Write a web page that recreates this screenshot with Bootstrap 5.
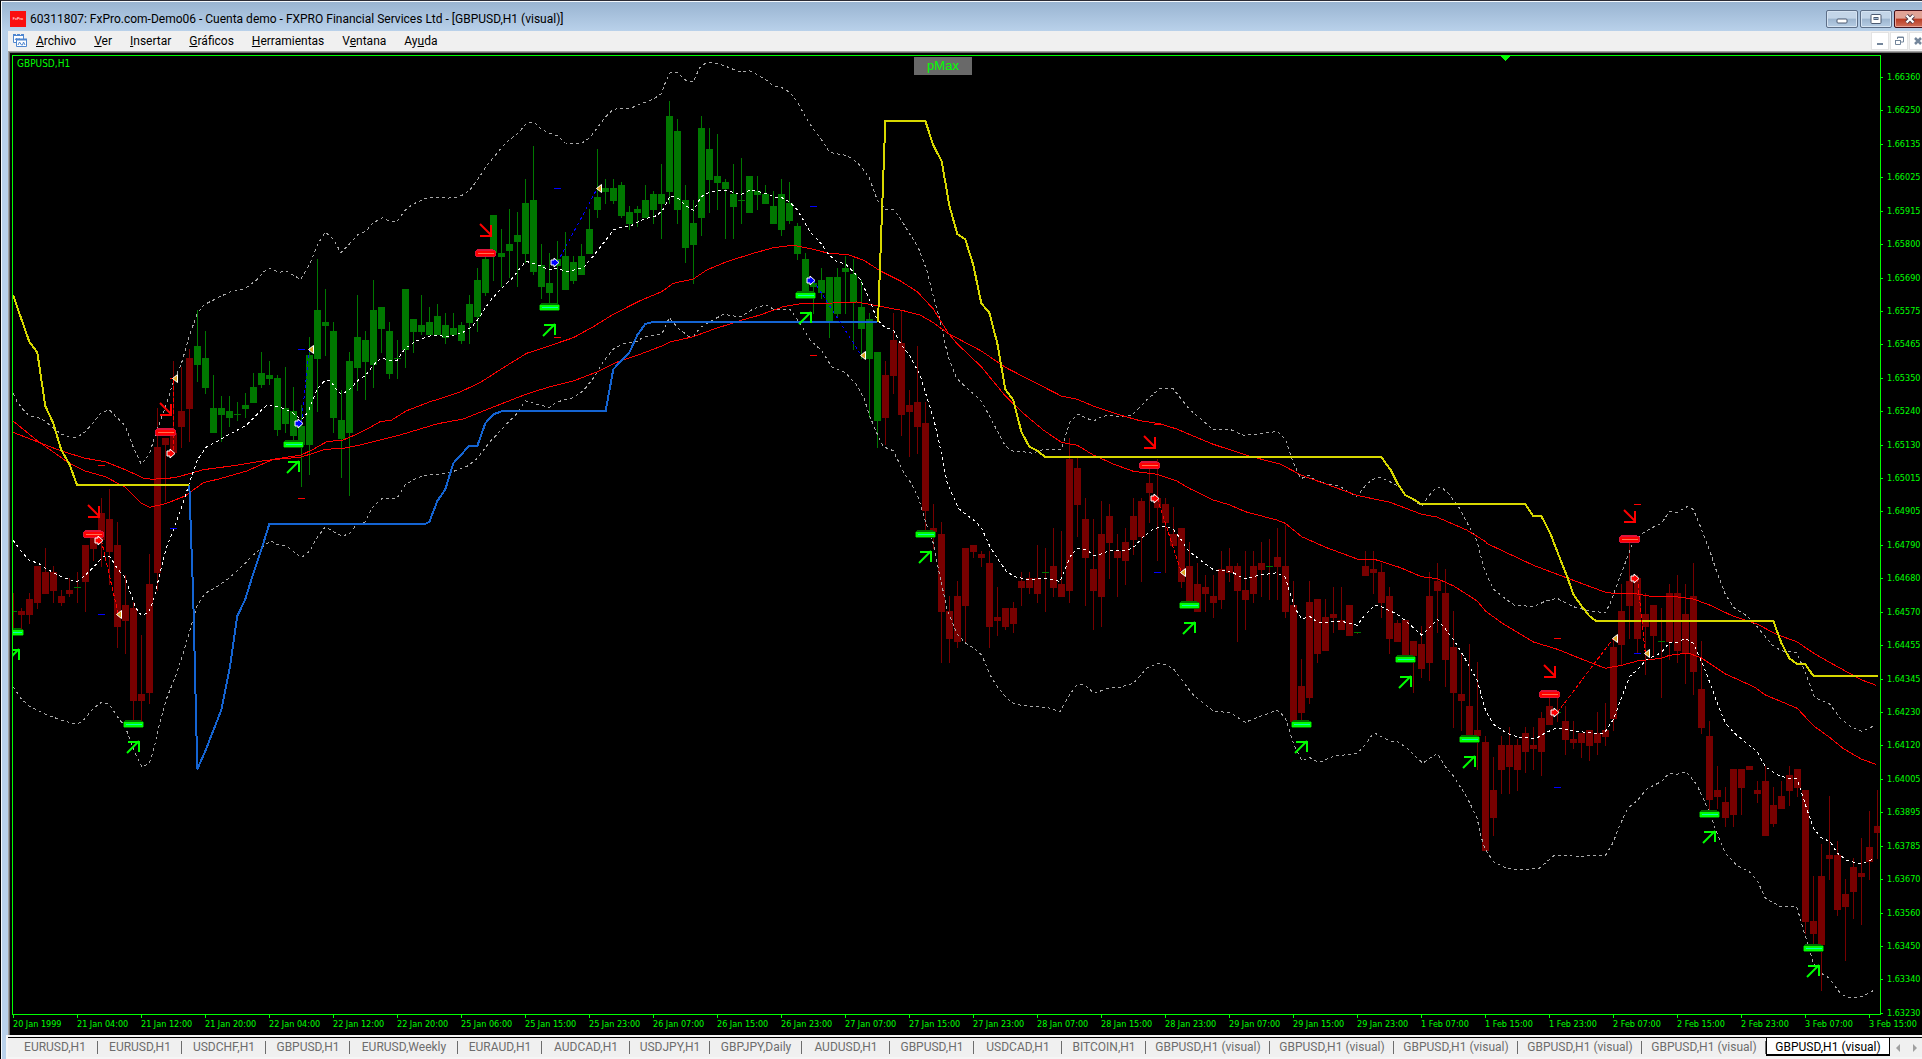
<!DOCTYPE html>
<html lang="es">
<head>
<meta charset="utf-8">
<meta name="viewport" content="width=device-width, initial-scale=1">
<title>60311807: FxPro.com-Demo06 - Cuenta demo</title>
<link rel="stylesheet" href="https://cdn.jsdelivr.net/npm/bootstrap@5.3.0/dist/css/bootstrap.min.css">
<style>
  :root { --lime: #00ff00; --ui: Roboto, "Noto Sans", sans-serif; --axis: "DejaVu Sans Condensed", "DejaVu Sans", sans-serif; }
  body { background: #b9d1ea; font-family: var(--ui); font-size: 12px; line-height: 16px; color: #000; }
  .app-window { border-top: 1px solid #2b2b35; border-left: 1px solid #000; box-shadow: inset 1px 1px 0 #f4f8fc; padding: 1px 0 2px 1px; }
  .title-strip { height: 29px; background: linear-gradient(#99b4d1, #b9d1ea); padding: 5px 0 0 8px; }
  .fx-logo { width: 16px; height: 16px; background: #fa0f0f; color: #fff; font-size: 4px; line-height: 16px; }
  .client-area { margin-left: 6px; }
  .sys-group { gap: 2px; padding-bottom: 3px; }
  .sys-btn { width: 32px; height: 18px; border: 1px solid #5d6f88; border-radius: 2px; padding: 0; box-shadow: inset 0 0 0 1px #d5e3f2; background: linear-gradient(#c3d5e8 0 45%, #9db5cf 50%, #b6cde4); line-height: 0; }
  .sys-close { border-color: #431019; box-shadow: inset 0 0 0 1px #e9a397; background: linear-gradient(#e0a396 0 45%, #b93a22 50%, #d0705a); margin-right: -4px; }
  .menu-strip { height: 20px; background: #f0f0f0; padding-left: 4px; }
  .menu-list { gap: 18px; }
  .menu-strip button.menu-item { border: 0; background: none; padding: 0; line-height: 20px; font-size: 12px; color: #000; }
  .mdi-group { gap: 1px; }
  .mdi-btn { width: 18px; height: 18px; border: 1px solid #e3e3e3; background: #fff; padding: 0; line-height: 0; }
  .mdi-last { margin-right: -5px; }
  .chart-pane { background: #000; border-top: 1px solid #a0a0a0; border-left: 1px solid #a0a0a0; box-shadow: inset 1px 1px 0 #696969; color: var(--lime); font-family: var(--axis); font-size: 9px; line-height: 12px; padding: 3px 0 0 3px; }
  .plot-box { border: 1px solid var(--lime); min-width: 0; }
  .plot-box svg.plot { width: 100%; height: 100%; display: block; }
  .symbol-name { left: 4px; top: 2px; font-size: 10px; }
  .pmax-btn { left: 48.26%; top: 1px; width: 58px; height: 18px; border: 0; padding: 0; background: #696969; color: var(--lime); font: 13px/18px "Liberation Sans", sans-serif; }
  .price-axis { width: 41px; padding: 16px 0 0 6px; margin-bottom: -4px; }
  .price-axis span { position: relative; display: block; }
  .price-axis span::before { content: ""; position: absolute; left: -6px; top: 6px; width: 2px; height: 1px; background: var(--lime); }
  .time-axis { display: grid; grid-template-columns: repeat(29, 64fr) 53fr; height: 20px; padding-left: 1px; }
  .time-axis span { position: relative; white-space: nowrap; padding-top: 3px; min-width: 0; }
  .time-axis span::before { content: ""; position: absolute; left: 0; top: 0; width: 1px; height: 3px; background: var(--lime); }
  .tab-strip { border-top: 1px solid #000; outline: 2px solid #f5f5f5; background: #f0f0f0; height: 20px; margin-top: 2px; display: grid;
    grid-template-columns: 90fr 84fr 84fr 84fr 108fr 84fr 88fr 80fr 92fr 88fr 84fr 88fr 84fr 124fr 124fr 124fr 124fr 124fr 124fr 32fr; }
  .tab-strip button { border: 0; background: none; padding: 0; color: #6d6d6d; font-size: 12px; line-height: 18px; height: 18px; white-space: nowrap; min-width: 0; position: relative; }
  .tab-strip button:first-child { padding-left: 4px; }
  .tab-strip button.chart-tab::after { content: ""; position: absolute; right: 0; top: 3px; height: 13px; width: 1px; background: #6d6d6d; }
  .tab-strip button.chart-tab.current { background: #fff; color: #000; border: solid #000; border-width: 0 1px 2px 1px; }
  .tab-strip button.chart-tab.current::after { display: none; }
</style>
<script src="https://cdn.jsdelivr.net/npm/bootstrap@5.3.0/dist/js/bootstrap.bundle.min.js"></script>
</head>
<body class="overflow-hidden">
<div class="app-window vh-100 d-flex flex-column">
  <header class="title-strip d-flex align-items-center flex-shrink-0">
    <div class="fx-logo text-center me-1 flex-shrink-0">FxPro</div>
    <div class="text-nowrap flex-grow-1">60311807: FxPro.com-Demo06 - Cuenta demo - FXPRO Financial Services Ltd - [GBPUSD,H1 (visual)]</div>
    <div class="sys-group d-flex align-self-end flex-shrink-0">
      <button class="sys-btn" aria-label="Minimizar"><svg width="12" height="10"><rect x="1" y="5" width="10" height="4" rx="1" fill="#fff" stroke="#4c5b72"/></svg></button>
      <button class="sys-btn" aria-label="Maximizar"><svg width="12" height="10"><rect x="1" y=".5" width="10" height="9" rx="1" fill="#fff" stroke="#4c5b72"/><rect x="4" y="3.500" width="4" height="2" fill="#9db5cf" stroke="#4c5b72"/></svg></button>
      <button class="sys-btn sys-close" aria-label="Cerrar"><svg width="12" height="10"><path d="M2.500 1.500 9.500 8.500M9.500 1.500 2.500 8.500" stroke="#4c3a48" stroke-width="4"/><path d="M2.500 1.500 9.500 8.500M9.500 1.500 2.500 8.500" stroke="#fff" stroke-width="2.300"/></svg></button>
    </div>
  </header>

  <main class="client-area d-flex flex-column flex-grow-1">
    <nav class="menu-strip d-flex align-items-center flex-shrink-0">
      <svg class="me-2" width="16" height="16" viewBox="0 0 16 16" fill="#fff" stroke="#4f86cf"><path d="M1.500 2.500v7h10v-7z"/><path d="M1 2h11" stroke-width="2" stroke-dasharray="3 1"/><path d="M3 7l1.500-2L6 7l1.500-2" fill="none"/><path d="M4.500 6.500v7h10v-7z"/><path d="M4 6.500h11" stroke-width="2"/><path d="M6 12l1.500-3 2 3h1l1-3 1.500 3" fill="none"/></svg>
      <div class="menu-list d-flex flex-grow-1">
        <button class="menu-item"><u>A</u>rchivo</button>
        <button class="menu-item"><u>V</u>er</button>
        <button class="menu-item"><u>I</u>nsertar</button>
        <button class="menu-item"><u>G</u>ráficos</button>
        <button class="menu-item"><u>H</u>erramientas</button>
        <button class="menu-item">V<u>e</u>ntana</button>
        <button class="menu-item">Ay<u>u</u>da</button>
      </div>
      <div class="mdi-group d-flex flex-shrink-0">
        <button class="mdi-btn" aria-label="Minimizar ventana"><svg width="10" height="10"><path d="M2 8h6" stroke="#74869b" stroke-width="2"/></svg></button>
        <button class="mdi-btn" aria-label="Restaurar ventana"><svg width="10" height="10" fill="none" stroke="#74869b"><path d="M3.500 3V1h6v5H7M3 1.500h7M1.500 4.500h5v4h-5zM1 4.500h6"/></svg></button>
        <button class="mdi-btn mdi-last" aria-label="Cerrar ventana"><svg width="10" height="10"><path d="M2 2l6 6M8 2 2 8" stroke="#74869b" stroke-width="2.500"/></svg></button>
      </div>
    </nav>

    <section class="chart-pane d-flex flex-column flex-grow-1">
      <div class="d-flex flex-grow-1">
        <div class="plot-box position-relative flex-grow-1">
          <svg class="plot position-absolute" viewBox="13 56 1867 958" preserveAspectRatio="none" shape-rendering="crispEdges" id="plot"></svg>
          <div class="symbol-name position-absolute">GBPUSD,H1</div>
          <button class="pmax-btn position-absolute">pMax</button>
        </div>
        <div class="price-axis d-flex flex-column justify-content-between flex-shrink-0" id="prices"></div>
      </div>
      <div class="time-axis flex-shrink-0" id="times"></div>
    </section>

    <footer class="tab-strip flex-shrink-0" id="tabs"></footer>
  </main>
</div>

<script>
const el = id => document.getElementById(id);

el('prices').innerHTML = [66360,66250,66135,66025,65915,65800,65690,65575,65465,65350,65240,65130,65015,64905,64790,64680,64570,64455,64345,64230,64120,64005,63895,63785,63670,63560,63450,63340,63230]
  .map(p => `<span>1.${p}</span>`).join('');

el('times').innerHTML = ['20 Jan 1999','21 Jan 04:00','21 Jan 12:00','21 Jan 20:00','22 Jan 04:00','22 Jan 12:00','22 Jan 20:00','25 Jan 06:00','25 Jan 15:00','25 Jan 23:00','26 Jan 07:00','26 Jan 15:00','26 Jan 23:00','27 Jan 07:00','27 Jan 15:00','27 Jan 23:00','28 Jan 07:00','28 Jan 15:00','28 Jan 23:00','29 Jan 07:00','29 Jan 15:00','29 Jan 23:00','1 Feb 07:00','1 Feb 15:00','1 Feb 23:00','2 Feb 07:00','2 Feb 15:00','2 Feb 23:00','3 Feb 07:00','3 Feb 15:00']
  .map(t => `<span>${t}</span>`).join('');

const v = 'GBPUSD,H1 (visual)';
el('tabs').innerHTML = ['EURUSD,H1','EURUSD,H1','USDCHF,H1','GBPUSD,H1','EURUSD,Weekly','EURAUD,H1','AUDCAD,H1','USDJPY,H1','GBPJPY,Daily','AUDUSD,H1','GBPUSD,H1','USDCAD,H1','BITCOIN,H1',v,v,v,v,v,v]
  .map((t, i) => `<button class="chart-tab${i === 18 ? ' current' : ''}">${t}</button>`).join('') +
  '<button aria-label="Desplazar"><svg width="26" height="10" fill="#a0a0a0"><path d="M7 1v8L3 5zM20 1v8l4-4z"/></svg></button>';

/* Panels of the chart: origin x, origin y, units per pixel in x and y */
const P = { A:[0,280,3,3], T:[180,150,3,3], B:[440,50,3,3], C:[860,50,3,3], E:[860,440,3,3], R:[1300,400,3,3], D:[1360,480,2.79,3] };
const at = (k, x, y) => [P[k][0] + x / P[k][2], P[k][1] + y / P[k][3]];
let out = '';

/* Candles: body top, body bottom, wick top, wick bottom */
const GREEN = '#007800', RED = '#780000';
const dojis = [0, 8, 129, 157, 168, 193, 206];
function candles(first, k, text) {
  text.split(';').forEach((row, n) => {
    const i = first + n, x = 13 + 8 * i;
    const [bt, bb, wt, wb] = row.trim().split(/\s+/).map(q => Math.round(P[k][1] + q / 3));
    const c = i >= 23 && i <= 108 ? GREEN : RED;
    if (wb > wt) out += `<rect x="${x}" y="${wt}" width="1" height="${wb - wt}" fill="${c}"/>`;
    out += `<rect x="${x - 3}" y="${bt}" width="7" height="${bb - bt}" fill="${dojis.includes(i) ? GREEN : c}"/>`;
  });
}
candles(0, 'A', '993 996 940 1045;993 1005 984 1048;957 1005 939 1032;858 969 858 987;876 942 804 942;876 933 858 969;948 969 930 978;930 942 895 951;921 924 876 969;795 906 795 996;770 807 770 843;699 780 654 861;717 816 627 915;795 1041 726 1104;975 1023 885 1122;984 1263 966 1320;1242 1263 1065 1322;912 1239 822 1272;501 879 384 933;474 496 474 666;460 520 243 520;393 441 261 504;234 387 207 486;198 255 90 306;234 324 153 342;384 459 285 459;384 405 348 486;393 414 348 441;402 405 366 423;375 387 339 414;321 369 279 369;279 315 216 324;285 297 243 315;294 450 285 468;384 432 261 459;393 468 321 480;438 495 375 621;225 495 171 585;90 237 -63 396;126 138 27 228;153 414 126 459;420 477 330 594;243 459 216 648;171 264 45 333;180 246 153 360;90 255 0 324;81 147 81 219;153 282 126 297;234 237 180 297;27 210 27 264;117 156 117 219;135 156 45 165;126 165 81 165;108 165 72 165;135 174 99 192;144 165 99 165;135 183 126 192;72 129 45 192');
candles(58, 'B', '690 801 654 846;627 729 620 738;495 610 495 693;609 621 537 711;582 603 477 684;555 576 486 711;459 612 387 639;450 666 288 675;645 711 582 747;699 729 609 765;627 648 573 765;618 720 546 720;636 693 618 702;618 675 582 675;537 612 477 612;441 480 297 504;414 426 387 462;414 453 387 462;405 498 396 504;486 522 468 540;477 489 468 531;450 504 405 504;432 480 423 522;432 462 342 567;198 426 153 462;243 480 207 522;450 594 405 639;519 585 450 702;234 504 198 558;297 390 234 489;378 399 252 480;396 417 387 567;432 471 342 567;450 453 324 522;378 489 378 489;423 435 378 480;432 462 405 462;468 522 423 522;432 540 387 558;459 513 396 522;528 612 519 630;627 729 609 729;699 711 690 792;690 729 654 747;681 816 681 864;681 792 654 801;654 666 618 792;672 759 627 900;771 837 690 927;807 927 789 1104;906 1113 906 1194;975 1104 933 1185;870 978 789 1032;879 1095 780 1158;1065 1086 1020 1221;1056 1131 888 1212');
candles(114, 'E', '-51 213 -114 270;264 276 192 327;282 516 246 669;513 598 468 669;468 606 423 624;324 498 324 606;315 336 315 354;342 354 333 381;369 561 333 624;531 543 441 588;504 561 504 570;504 552 486 579;423 444 396 498;414 444 396 462;414 462 315 489;396 399 324 516;378 444 264 471;432 471 273 471;57 453 -6 489;84 195 54 291;237 354 174 498;387 453 237 570;282 471 183 561;228 309 192 417;333 354 282 471;306 363 264 435;228 300 174 345;183 291 174 426;129 159 84 249;174 204 57 363;192 249 174 399;282 318 201 318;264 426 264 444;378 486 306 486;432 516 369 516;441 462 405 516;468 489 405 534;387 480 333 507;378 399 324 426;378 453 369 606;450 480 333 570;378 462 333 489;369 390 306 471;378 381 297 480;351 381 264 480;378 516 255 534;495 845 423 845;738 819 657 840;486 774 423 792;477 642 477 669;531 633 477 633;522 534 441 579;540 570 441 570;495 588 495 588;576 579 576 582;378 408 333 408;387 399 333 462');
candles(171, 'D', '276 369 249 414;348 477 321 522;429 486 420 486;420 525 420 528;483 528 483 639;492 567 438 594;348 549 276 603;303 333 249 459;339 540 267 621;501 639 393 744;642 663 519 753;678 768 492 768;750 768 546 870;786 1113 768 1113;930 1014 831 1068;795 870 768 942;795 861 741 942;795 870 777 933;759 816 741 879;795 807 741 870;714 816 696 888;678 735 655 735;696 699 655 726;723 780 678 825;777 789 723 807;759 789 759 834;750 798 750 843;759 789 696 825;750 771 669 798;501 717 470 753;393 495 312 555;303 378 190 477;294 477 285 519;402 441 339 585;375 468 375 530;483 486 384 654;339 486 312 540;339 513 285 549;402 519 312 612;348 576 249 645;627 744 483 762;768 960 723 990;930 951 858 987;966 1014 921 1041;867 1005 867 1041;867 924 867 1005;858 870 858 870;930 942 903 969;903 1068 858 1068;975 1032 921 1041;948 987 903 987;885 933 858 978;867 924 867 951;930 1326 930 1362;1323 1362 1188 1395;1188 1395 1092 1533;1125 1137 948 1200;1125 1290 1083 1308;1242 1281 1197 1443;1161 1236 1134 1317;1179 1191 1074 1335;1101 1146 993 1200;1038 1059 930 1137');

/* Indicator lines, one string of points for each panel they cross */
function line(color, width, dash, parts) {
  const pts = parts.flatMap(([k, s]) => s.trim().split(/\s+/).map(q => at(k, ...q.split(',').map(Number)).map(n => n.toFixed(1)).join(',')));
  out += `<polyline fill="none" stroke="${color}" stroke-width="${width}" ${dash ? `stroke-dasharray="${dash}"` : ''} points="${pts.join(' ')}"/>`;
}
line('#a8a8a8', 1, '3 3', [
 ['A','39,340 52,366 70,390 88,408 112,411 136,423 160,445 184,462 208,471 232,472 256,455 280,428 304,397 328,390 352,414 376,438 400,502 424,553 448,523 466,465 480,425 500,370 520,305 544,252 568,168 592,100'],
 ['T','72,465 90,455 120,440 150,426 180,420 196,415 230,390 250,366 268,355 298,367 320,364 340,376 362,388 390,340 412,285 436,246 462,270 482,308 510,280 534,254 558,243 580,218 608,203 630,214 652,214 676,180 700,162 740,144 780,142 800,145 830,141 850,134 868,122 885,100'],
 ['B','112,390 140,347 184,294 210,268 234,250 262,217 282,217 304,237 328,250 352,257 376,279 424,280 448,265 472,233 496,202 520,178 544,175 572,175 600,162 640,148 664,131 676,98 690,68 712,67 736,90 760,95 778,55 796,40 820,38 850,46 880,58 904,67 928,62 952,74 976,88 1000,107 1024,112 1048,126 1072,155 1096,200 1120,237 1144,268 1168,307 1216,316 1240,328 1264,350 1288,384 1312,450 1336,478 1360,478 1384,510 1408,550 1434,590'],
 ['C','200,660 215,720 240,810 264,920 290,985 318,1012 364,1053 400,1120 436,1188 460,1204 490,1205 518,1210 552,1198 604,1198 630,1115 655,1093 700,1114 724,1100 748,1096 772,1100 800,1100 820,1092 860,1050 900,1015 940,1017 990,1080 1020,1105 1060,1140 1110,1138 1150,1156 1200,1152 1252,1144 1276,1168 1295,1225 1320,1283'],
 ['R','5,235 28,226 45,240 82,252 120,259 140,272 170,290 200,252 220,238 240,232 270,245 300,262 318,288 340,300 365,318 385,290 405,266 425,262 445,280 480,327 510,385 530,420 540,460 552,505'],
 ['D','360,300 372,327 410,360 430,375 484,380 520,362 550,355 573,368 595,380 640,393 685,398 700,365 725,290 745,235 760,190 790,158 815,143 841,130 863,95 885,97 912,80 930,88 950,140 975,210 997,280 1020,345 1045,385 1080,408 1108,440 1150,495 1175,512 1218,518 1240,570 1268,652 1310,672 1340,715 1370,740 1400,754 1440,735']]);
line('#a8a8a8', 1, '3 3', [
 ['A','39,1220 64,1257 88,1278 136,1302 184,1321 232,1333 256,1315 280,1285 304,1267 328,1272 352,1310 376,1340 390,1380 410,1430 426,1460 448,1450 462,1405 480,1325 500,1255 530,1180 550,1120 570,1050 590,980 615,940 640,927 680,900 720,865 760,825 790,800 812,782 830,793 860,798 904,833 930,812 950,775 976,740 1000,755 1028,769 1052,758 1064,740 1096,725 1115,685 1145,656 1190,656 1216,614 1250,594 1290,583'],
 ['B','0,1273 30,1268 85,1247 112,1225 150,1175 200,1122 230,1092 256,1052 290,1063 328,1072 350,1056 400,1043 430,1022 460,985 490,935 520,897 550,882 590,875 610,861 665,853 688,803 715,835 745,858 762,858 780,833 810,815 850,793 900,801 940,777 976,764 1000,777 1050,777 1080,820 1110,870 1145,902 1175,950 1216,968 1250,1005 1272,1045 1290,1100 1315,1160 1330,1190 1360,1202 1390,1265 1415,1302 1436,1345'],
 ['E','195,240 220,310 240,410 262,510 290,580 315,608 345,627 365,645 390,705 412,740 440,775 465,793 510,799 560,802 600,815 625,770 652,733 676,736 702,760 750,743 780,742 820,730 860,685 892,670 916,674 940,686 1000,765 1060,813 1110,818 1156,847 1200,829 1252,811 1276,832 1300,910 1325,962 1350,953 1376,968 1420,949 1492,940 1515,915 1540,880'],
 ['D','42,760 85,784 105,785 130,803 175,850 195,835 216,820 238,860 262,890 300,955 327,1015 335,1060 348,1105 372,1145 410,1165 440,1170 500,1165 540,1128 575,1126 615,1131 640,1127 685,1126 705,1090 725,1035 747,985 775,960 800,927 840,905 863,880 885,883 910,875 940,915 970,985 1000,1070 1020,1120 1050,1155 1090,1178 1110,1205 1131,1255 1175,1281 1218,1279 1243,1370 1265,1450 1287,1480 1310,1495 1340,1540 1360,1552 1390,1553 1410,1545 1440,1527']]);
line('#f00', 1, '', [
 ['A','39,423 112,482 208,550 256,573 316,590 376,622 424,670 450,682 500,670 555,648 610,608 660,596 740,573 820,538 904,525 940,508 980,485 1030,480 1060,467 1100,448 1140,425 1175,420 1220,392 1290,365'],
 ['B','0,1046 60,1026 120,998 190,953 260,910 320,890 400,863 460,830 520,793 600,752 665,725 700,700 760,687 800,660 860,635 940,610 1000,593 1060,586 1120,598 1170,611 1220,613 1270,630 1320,662'],
 ['C','120,692 172,725 220,777 264,848 290,880 364,950 436,1038 490,1090 550,1140 604,1177 652,1186 700,1215 760,1242 820,1264 892,1273 950,1293 990,1316 1055,1348'],
 ['E','1060,180 1110,195 1156,215 1250,240 1276,250 1325,290 1400,323 1492,357'],
 ['D','0,238 40,238 110,262 172,290 216,296 260,317 327,363 350,393 400,432 484,486 551,508 620,538 685,565 730,556 774,543 841,535 863,526 915,519 953,534 1020,582 1100,621 1131,645 1220,685 1265,737 1310,772 1350,807 1400,838 1440,853']]);
line('#f00', 1, '', [
 ['A','39,457 112,485 184,513 256,535 316,545 376,569 430,594 455,598 525,593 610,569 700,557 800,541 904,531 976,508 1030,505 1085,494 1140,480 1200,465 1300,435'],
 ['B','0,1120 70,1107 150,1075 260,1032 330,1010 400,993 470,966 530,937 600,913 665,888 690,876 760,860 820,838 900,812 960,795 1030,770 1090,760 1180,759 1250,756 1320,769'],
 ['C','130,782 180,795 220,818 264,850 364,903 436,952 500,985 604,1038 652,1048 700,1068 780,1095 840,1112 900,1121 950,1137 1000,1158 1060,1183 1170,1219 1260,1242'],
 ['R','5,226 80,253 170,286 270,307 365,343 410,351 500,390 560,427'],
 ['D','353,190 484,256 580,295 685,337 720,342 762,340 810,349 880,350 930,357 975,375 1040,408 1108,432 1160,462 1220,486 1265,519 1310,547 1400,600 1440,616']]);
line('#fff', 1, '3 3', [
 ['A','39,780 64,815 88,841 115,850 136,864 160,878 184,890 208,899 232,904 256,886 280,862 310,830 330,830 352,866 376,893 390,935 408,985 426,1008 448,993 462,955 480,880 500,800 520,750 544,685 568,610 592,540 620,500 650,485 690,462 740,435 772,402 800,376 830,380 856,387 880,400 904,419 925,395 950,330 976,300 992,303 1008,328 1024,343 1048,330 1075,300 1096,287 1120,255 1144,234 1168,240 1192,240 1216,205 1250,182 1290,168'],
 ['B','0,857 20,860 64,850 96,830 120,800 148,755 184,715 220,682 240,655 258,634 290,643 328,660 350,655 380,664 400,661 430,653 460,618 490,580 520,540 548,530 570,529 610,508 650,497 672,475 690,437 715,445 738,468 760,481 784,440 808,427 850,421 880,427 904,433 930,420 960,426 985,432 1005,442 1024,442 1048,455 1072,480 1090,510 1110,545 1145,583 1165,612 1185,632 1216,642 1240,665 1262,690 1285,740 1312,810 1336,833 1360,840 1384,885 1408,915 1440,975'],
 ['C','200,1040 222,1110 240,1190 262,1300 280,1340'],
 ['E','295,205 320,225 345,243 365,265 390,320 412,355 440,395 465,410 508,420 552,415 600,424 612,395 630,350 652,325 680,330 705,348 750,332 800,332 825,318 850,290 880,267 916,258 940,268 964,300 985,332 1040,375 1062,390 1110,394 1156,417 1190,407 1250,398 1276,412 1290,460 1305,505 1325,537 1350,530 1375,548 1445,544 1492,556 1515,525 1542,497'],
 ['D','50,376 75,388 104,403 130,425 172,465 190,447 216,418 238,447 262,480 290,530 327,600 350,690 372,733 410,760 440,771 490,776 520,757 551,743 590,752 640,758 680,762 707,718 729,655 752,590 775,568 798,540 820,528 841,518 863,488 885,487 908,475 930,490 953,545 975,605 997,670 1020,730 1045,760 1108,815 1131,860 1165,885 1195,895 1220,897 1243,975 1265,1045 1287,1073 1312,1085 1332,1120 1360,1142 1399,1152 1435,1136']]);
line('#1464d2', 2, '', [
 ['A','568,616 580,960 592,1468 616,1413 664,1290 690,1160 712,1008 736,958 760,880 784,810 808,732 1274,732 1288,726 1312,663 1336,628 1360,550 1408,497'],
 ['B','112,1188 136,1120 160,1093 188,1083 497,1082 520,958 544,932 568,908 592,855 616,822 640,816 1312,816']]);
line('#d8d800', 2, '', [['A','39,45 88,185 112,217 136,378 160,430 184,510 208,552 231,614 568,614']]);
line('#d8d800', 2, '', [
 ['C','54,816 76,212 196,212 220,286 245,334 268,466 292,552 316,568 340,645 364,760 388,788 412,880 436,1018 460,1050 484,1145 508,1190 532,1202 555,1221'],
 ['R','244,171 272,210 292,250 316,286 340,297 362,312 676,312 700,348 724,348 750,398 772,455'],
 ['D','578,290 595,343 618,378 640,408 658,423 1153,423 1176,490 1198,535 1218,551 1242,552 1265,588 1445,588']]);

/* Trades: dashed link from entry to exit, then level ticks and markers */
[['A','304,780 355,1003','#f00'],['A','520,300 520,520','#f00'],['E','892,175 964,397','#f00'],['D','551,697 707,475','#f00'],['D','774,295 796,520','#f00'],
 ['A','904,430 928,208','#00f'],['B','352,637 472,415','#00f'],['B','1120,691 1264,916','#00f']].forEach(([k, s, c]) => line(c, 1, c === '#f00' ? '4 2' : '3 3', [[k, s]]));

const each = (list, draw) => list.forEach(([k, x, y]) => { const [px, py] = at(k, x, y); out += `<g transform="translate(${Math.round(px - .5)} ${Math.round(py - .5)})">${draw}</g>`; });
each([['A',304,1003],['A',520,745],['A',904,208],['B',352,415],['B',1120,469],['E',892,397],['D',551,922],['D',774,520]], '<rect x="-3" width="7" height="1" fill="#00f"/>');
each([['A',304,556],['A',520,295],['A',904,655],['B',352,862],['B',1120,916],['C',892,1122],['D',551,475],['D',774,73]], '<rect x="-3" width="7" height="1" fill="#f00"/>');

each([['A',40,1057],['A',400,1333],['A',880,493],['B',328,772],['B',1096,736],['E',196,283],['E',988,496],['E',1324,853],['D',127,538],['D',306,778],['D',975,1003],['D',1266,1405]],
 '<path d="M-8-4H8V-3H10V-2H11V3H10V4H-9V3H-10V-2H-9V-3H-8z" fill="#006e00"/><path d="M-9-2H10V3H-9z" fill="#0f0"/><rect x="-7" width="16" height="1" fill="#00ffb4"/><path d="M-6 29 6 17" stroke="#0f0" stroke-width="2" shape-rendering="auto"/><path d="M-5 17H7V28H5V19H-5z" fill="#0f0"/>');
each([['A',280,763],['A',496,457],['B',136,610],['C',868,1246],['D',529,643],['D',752,178]],
 '<path d="M-8-4H8V-3H10V-2H11V3H10V4H-9V3H-10V-2H-9V-3H-8z" fill="#dc143c"/><path d="M-9-2H10V3H-9z" fill="#f00"/><rect x="-7" width="16" height="1" fill="#ff7050"/><path d="M-5-29 6-18" stroke="#f00" stroke-width="2" shape-rendering="auto"/><path d="M5-28H7V-16H-5V-18H5z" fill="#f00"/>');

const arrow = c => `<path d="M-3-2H0V-4L5 .5 0 5V3H-3z" fill="${c}" stroke="#fff" stroke-width="1" shape-rendering="auto"/>`;
each([['A',295,780],['A',511,520],['E',884,175],['D',767,295],['D',543,697]], arrow('#f00'));
each([['A',895,430],['B',344,637],['B',1112,691]], arrow('#00f'));
each([['A',358,1003],['A',527,295],['A',935,208],['B',478,415],['B',1270,916],['E',969,397],['D',712,475],['D',802,520]],
 '<path d="M-2.500.5 2.500-3.500V4.500z" fill="#daa520" stroke="#fff" shape-rendering="auto"/>');
out += '<path d="M1500 56h11l-5.500 5z" fill="#0f0"/>';
el('plot').innerHTML = out;
</script>
</body>
</html>
